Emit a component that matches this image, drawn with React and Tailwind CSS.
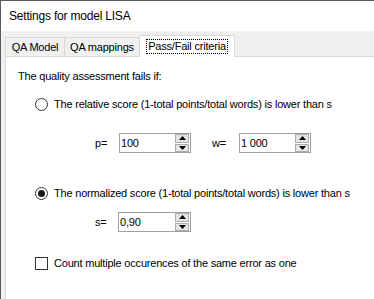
import React from "react";

function Radio({ checked }) {
  return (
    <span className="w-[13px] h-[13px] rounded-full border border-[#333333] bg-white flex items-center justify-center shrink-0">
      {checked && <span className="w-[7px] h-[7px] rounded-full bg-[#1a1a1a]" />}
    </span>
  );
}

function Spin({ value, width = "w-[72px]" }) {
  return (
    <div className={`${width} h-[20px] border border-[#a0a0a0] bg-white flex items-center`}>
      <span className="flex-1 pl-[1px] text-[11px] leading-none text-black">{value}</span>
      <div className="w-[14px] h-[18px] mr-[1px] flex flex-col gap-[1px]">
        <div className="h-[8.5px] flex-1 bg-[#e5e5e5] border border-[#adadad] flex items-center justify-center">
          <svg width="7" height="4" viewBox="0 0 7 4"><path d="M0 4 L3.5 0 L7 4 Z" fill="#000" /></svg>
        </div>
        <div className="h-[8.5px] flex-1 bg-[#e5e5e5] border border-[#adadad] flex items-center justify-center">
          <svg width="7" height="4" viewBox="0 0 7 4"><path d="M0 0 L3.5 4 L7 0 Z" fill="#000" /></svg>
        </div>
      </div>
    </div>
  );
}

export default function App() {
  return (
    <div
      className="w-[374px] h-[299px] overflow-hidden bg-white border-t border-l border-[#5a5a5a] text-black tracking-[-0.2px]"
      style={{ fontFamily: '"Liberation Sans", Arial, sans-serif' }}
    >
      {/* Title */}
      <div className="h-[30px] flex items-center pl-[8px] text-[12px]">Settings for model LISA</div>

      {/* Tab strip */}
      <div className="h-[25px] bg-[#f0f0f0] flex items-end pl-[4px] text-[11px]">
        <div className="w-[60px] h-[19px] border border-b-0 border-[#d9d9d9] flex items-center justify-center">QA Model</div>
        <div className="w-[75px] h-[19px] border border-b-0 border-l-0 border-[#d9d9d9] flex items-center justify-center">QA mappings</div>
        <div className="relative z-10 w-[95px] h-[22px] -mb-px bg-white border border-b-0 border-l-0 border-[#d9d9d9] flex items-center justify-center">
          <span className="border border-dotted border-black px-[1px] leading-[13px]">Pass/Fail criteria</span>
        </div>
      </div>

      {/* Panel */}
      <div className="flex bg-[#f0f0f0] pl-[4px] h-[244px]">
        <div className="flex-1 bg-white border-t border-l border-[#d9d9d9] pl-[12px] pt-[11px] flex flex-col text-[11px]">
          <div className="h-[16px] flex items-center">The quality assessment fails if:</div>

          <div className="h-[16px] mt-[12px] ml-[17px] flex items-center gap-[6px]">
            <Radio />
            <span>The relative score (1-total points/total words) is lower than s</span>
          </div>

          <div className="h-[20px] mt-[21px] flex items-center">
            <span className="ml-[77px] w-[24px]">p=</span>
            <Spin value="100" />
            <span className="ml-[21px] w-[27px]">w=</span>
            <Spin value="1 000" />
          </div>

          <div className="h-[16px] mt-[32px] ml-[17px] flex items-center gap-[6px]">
            <Radio checked />
            <span>The normalized score (1-total points/total words) is lower than s</span>
          </div>

          <div className="h-[20px] mt-[11px] flex items-center">
            <span className="ml-[77px] w-[23px]">s=</span>
            <Spin value="0,90" width="w-[73px]" />
          </div>

          <div className="h-[16px] mt-[23px] ml-[17px] flex items-center gap-[6px]">
            <span className="w-[13px] h-[13px] border border-[#333333] bg-white shrink-0" />
            <span>Count multiple occurences of the same error as one</span>
          </div>
        </div>
      </div>
    </div>
  );
}
